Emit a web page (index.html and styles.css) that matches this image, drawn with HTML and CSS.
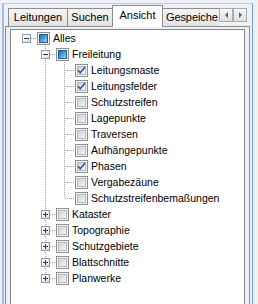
FILE: index.html
```html
<!DOCTYPE html>
<html>
<head>
<meta charset="utf-8">
<link rel="stylesheet" href="styles.css">
</head>
<body>
<div class="frame">
  <div class="tabstrip">
    <div class="tab w1">Leitungen</div>
    <div class="tab w2">Suchen</div>
    <div class="tab sel">Ansicht</div>
    <div class="tab clip">Gespeiche</div>
    <div class="sbtn"><span class="tri left"></span></div>
    <div class="sbtn"><span class="tri right"></span></div>
  </div>
  <div class="page">
    <div class="tree">
      <div class="row">
        <div class="c h"><span class="ex"><svg width="7" height="7"><rect x="1" y="3" width="5" height="1"/></svg></span></div>
        <span class="cb"><span class="in mix"></span></span><span class="lb">Alles</span>
      </div>
      <div class="row">
        <div class="c"></div>
        <div class="c t b h"><span class="ex"><svg width="7" height="7"><rect x="1" y="3" width="5" height="1"/></svg></span></div>
        <span class="cb"><span class="in mix"></span></span><span class="lb">Freileitung</span>
      </div>
      <div class="row">
        <div class="c"></div><div class="c t b"></div><div class="c t b h"></div>
        <span class="cb"><span class="in"><svg class="ck" width="9" height="9"><path d="M1 4.2 L3.3 6.8 L8 1"/></svg></span></span><span class="lb">Leitungsmaste</span>
      </div>
      <div class="row">
        <div class="c"></div><div class="c t b"></div><div class="c t b h"></div>
        <span class="cb"><span class="in"><svg class="ck" width="9" height="9"><path d="M1 4.2 L3.3 6.8 L8 1"/></svg></span></span><span class="lb">Leitungsfelder</span>
      </div>
      <div class="row">
        <div class="c"></div><div class="c t b"></div><div class="c t b h"></div>
        <span class="cb"><span class="in"></span></span><span class="lb">Schutzstreifen</span>
      </div>
      <div class="row">
        <div class="c"></div><div class="c t b"></div><div class="c t b h"></div>
        <span class="cb"><span class="in"></span></span><span class="lb">Lagepunkte</span>
      </div>
      <div class="row">
        <div class="c"></div><div class="c t b"></div><div class="c t b h"></div>
        <span class="cb"><span class="in"></span></span><span class="lb">Traversen</span>
      </div>
      <div class="row">
        <div class="c"></div><div class="c t b"></div><div class="c t b h"></div>
        <span class="cb"><span class="in"></span></span><span class="lb">Aufhängepunkte</span>
      </div>
      <div class="row">
        <div class="c"></div><div class="c t b"></div><div class="c t b h"></div>
        <span class="cb"><span class="in"><svg class="ck" width="9" height="9"><path d="M1 4.2 L3.3 6.8 L8 1"/></svg></span></span><span class="lb">Phasen</span>
      </div>
      <div class="row">
        <div class="c"></div><div class="c t b"></div><div class="c t b h"></div>
        <span class="cb"><span class="in"></span></span><span class="lb">Vergabezäune</span>
      </div>
      <div class="row">
        <div class="c"></div><div class="c t b"></div><div class="c t h"></div>
        <span class="cb"><span class="in"></span></span><span class="lb">Schutzstreifenbemaßungen</span>
      </div>
      <div class="row">
        <div class="c"></div>
        <div class="c t b h"><span class="ex"><svg width="7" height="7"><rect x="1" y="3" width="5" height="1"/><rect x="3" y="1" width="1" height="5"/></svg></span></div>
        <span class="cb"><span class="in"></span></span><span class="lb">Kataster</span>
      </div>
      <div class="row">
        <div class="c"></div>
        <div class="c t b h"><span class="ex"><svg width="7" height="7"><rect x="1" y="3" width="5" height="1"/><rect x="3" y="1" width="1" height="5"/></svg></span></div>
        <span class="cb"><span class="in"></span></span><span class="lb">Topographie</span>
      </div>
      <div class="row">
        <div class="c"></div>
        <div class="c t b h"><span class="ex"><svg width="7" height="7"><rect x="1" y="3" width="5" height="1"/><rect x="3" y="1" width="1" height="5"/></svg></span></div>
        <span class="cb"><span class="in"></span></span><span class="lb">Schutzgebiete</span>
      </div>
      <div class="row">
        <div class="c"></div>
        <div class="c t b h"><span class="ex"><svg width="7" height="7"><rect x="1" y="3" width="5" height="1"/><rect x="3" y="1" width="1" height="5"/></svg></span></div>
        <span class="cb"><span class="in"></span></span><span class="lb">Blattschnitte</span>
      </div>
      <div class="row">
        <div class="c"></div>
        <div class="c t h"><span class="ex"><svg width="7" height="7"><rect x="1" y="3" width="5" height="1"/><rect x="3" y="1" width="1" height="5"/></svg></span></div>
        <span class="cb"><span class="in"></span></span><span class="lb">Planwerke</span>
      </div>
    </div>
  </div>
</div>
</body>
</html>
```

FILE: styles.css
```css
html, body {
  margin: 0;
  padding: 0;
}
body {
  width: 258px;
  height: 304px;
  overflow: hidden;
  background: #f0f0f0;
  font-family: "Liberation Sans", Arial, sans-serif;
  font-size: 11px;
  color: #000;
}
.frame {
  box-sizing: border-box;
  width: 251px;
  height: 301px;
  margin: 3px 0 0 2px;
  border-top: 1px solid #b9cbef;
  border-left: 2px solid #a4b9ee;
  border-right: 1px solid #6a9cf0;
  overflow: hidden;
}
.tabstrip {
  display: flex;
  align-items: flex-end;
  height: 22px;
  padding-left: 4px;
}
.tab {
  box-sizing: border-box;
  height: 18px;
  border: 1px solid #898c95;
  border-bottom: none;
  background: linear-gradient(#f4f4f4, #e2e2e2);
  text-align: center;
  line-height: 17px;
  white-space: nowrap;
  flex: none;
}
.tab + .tab {
  margin-left: -1px;
}
.w1 { width: 60px; }
.w2 { width: 46px; }
.sel {
  width: 51px;
  height: 22px;
  margin-bottom: -1px;
  background: #fff;
  line-height: 19px;
  position: relative;
  z-index: 1;
}
.clip {
  width: 57px;
  overflow: hidden;
  border-right: none;
  text-align: left;
  padding-left: 3px;
  letter-spacing: -0.1px;
}
.sbtn {
  box-sizing: border-box;
  width: 14px;
  height: 14px;
  margin-bottom: 4px;
  border: 1px solid #a9acb4;
  background: linear-gradient(#f7f7f7, #e0e0e0);
  display: flex;
  align-items: center;
  justify-content: center;
  flex: none;
}
.tri {
  width: 0;
  height: 0;
  border-top: 3px solid transparent;
  border-bottom: 3px solid transparent;
}
.tri.left { border-right: 3px solid #4d6287; }
.tri.right { border-left: 3px solid #4d6287; }

.page {
  box-sizing: border-box;
  width: 245px;
  height: 290px;
  margin-left: 1px;
  border: 1px solid #898c95;
  background: #f0f0f0;
  padding: 2px 4px 0 4px;
}
.tree {
  box-sizing: border-box;
  height: 290px;
  border: 1px solid #828790;
  background: #fff;
  padding-left: 6px;
}
.row {
  display: flex;
  align-items: flex-start;
  height: 16px;
}
.c {
  --t: none;
  --b: none;
  --h: none;
  width: 19px;
  height: 16px;
  flex: none;
  display: flex;
  justify-content: center;
  align-items: flex-start;
  background-image: var(--t), var(--b), var(--h);
  background-position: 9px 0, 9px 8px, 10px 8px;
  background-size: 1px 8px, 1px 8px, 9px 1px;
  background-repeat: no-repeat;
}
.c.t { --t: repeating-linear-gradient(to bottom, #a0a0a0 0 1px, transparent 1px 2px); }
.c.b { --b: repeating-linear-gradient(to bottom, #a0a0a0 0 1px, transparent 1px 2px); }
.c.h { --h: repeating-linear-gradient(to right, #a0a0a0 0 1px, transparent 1px 2px); }
.ex {
  box-sizing: border-box;
  width: 9px;
  height: 9px;
  margin-top: 4px;
  border: 1px solid #8f9aa6;
  background: linear-gradient(135deg, #ffffff 20%, #d3d6db);
  display: block;
}
.ex svg {
  display: block;
  fill: #1e3a70;
  shape-rendering: crispEdges;
}
.cb {
  box-sizing: border-box;
  width: 13px;
  height: 13px;
  margin: 2px 0 0 1px;
  border: 1px solid #8e8f8f;
  background: #f4f4f4;
  padding: 1px;
  flex: none;
  display: block;
}
.in {
  box-sizing: border-box;
  display: block;
  width: 9px;
  height: 9px;
  border: 1px solid #b4b8be;
  background: linear-gradient(135deg, #cdd1d6, #f7f7f7);
}
.in .ck {
  display: block;
  margin: -1px;
  overflow: visible;
}
.ck path {
  fill: none;
  stroke: #3b5a9c;
  stroke-width: 1.7;
}
.in.mix {
  border: 1px solid #265e91;
  background: linear-gradient(135deg, #1c6fb3 0%, #4ea6dc 55%, #a6dcf5 100%);
}
.lb {
  margin-left: 3px;
  font-size: 10.5px;
  line-height: 16px;
  white-space: nowrap;
}
```
